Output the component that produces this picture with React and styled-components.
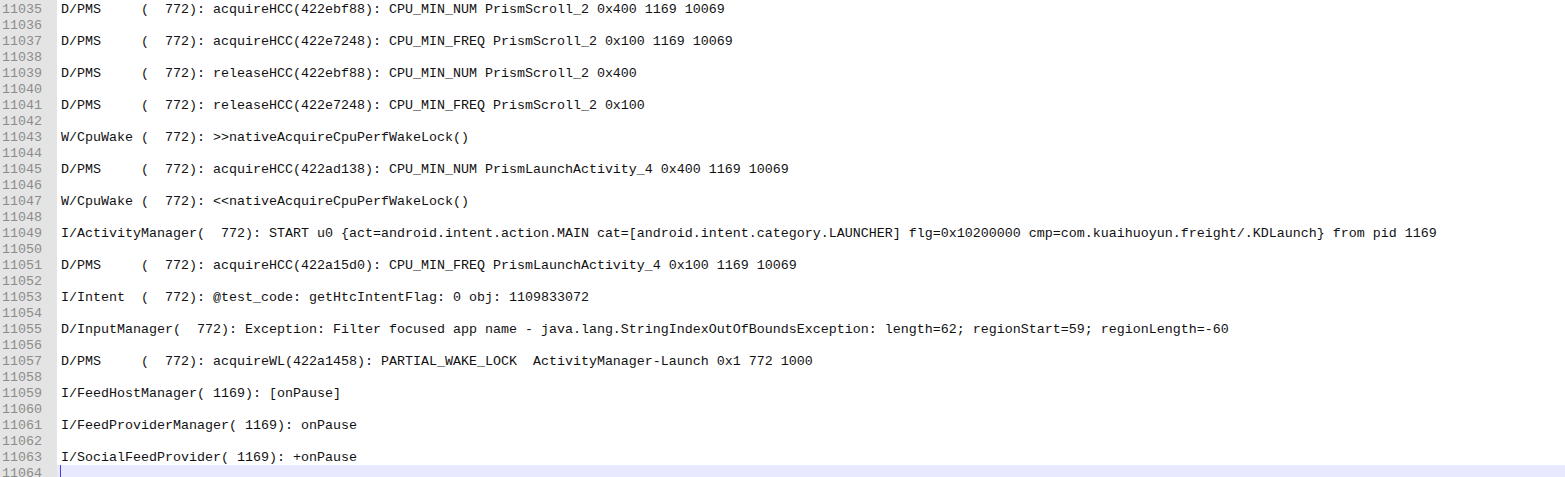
import React from "react"
import styled, { createGlobalStyle } from "styled-components"

const GlobalStyle = createGlobalStyle`
  html, body {
    margin: 0;
    padding: 0;
    background: #ffffff;
    overflow: hidden;
  }
`

const Editor = styled.div`
  width: 1565px;
  height: 477px;
  overflow: hidden;
  display: flex;
  flex-direction: column;
  padding-top: 1px;
  box-sizing: border-box;
  background: linear-gradient(to right, #e4e4e4 57px, #ffffff 57px);
  font-family: "Liberation Mono", "Courier New", monospace;
  font-size: 13.33px;
`

const Row = styled.div`
  display: grid;
  grid-template-columns: 57px 1fr;
  height: 16px;
  line-height: 18px;
  overflow: hidden;
  flex-shrink: 0;
`

const LineNo = styled.div`
  background: #e4e4e4;
  color: #8c8c8c;
  padding-left: 2px;
  white-space: pre;
`

const Code = styled.div`
  position: relative;
  padding-left: 4px;
  color: #111111;
  white-space: pre;
  background: ${({ current }) => (current ? "#e8e8ff" : "#ffffff")};
`

const Caret = styled.span`
  position: absolute;
  left: 3px;
  top: 0;
  width: 1px;
  height: 16px;
  background: #4b3fd6;
`

const lines = [
  "D/PMS     (  772): acquireHCC(422ebf88): CPU_MIN_NUM PrismScroll_2 0x400 1169 10069",
  "",
  "D/PMS     (  772): acquireHCC(422e7248): CPU_MIN_FREQ PrismScroll_2 0x100 1169 10069",
  "",
  "D/PMS     (  772): releaseHCC(422ebf88): CPU_MIN_NUM PrismScroll_2 0x400",
  "",
  "D/PMS     (  772): releaseHCC(422e7248): CPU_MIN_FREQ PrismScroll_2 0x100",
  "",
  "W/CpuWake (  772): >>nativeAcquireCpuPerfWakeLock()",
  "",
  "D/PMS     (  772): acquireHCC(422ad138): CPU_MIN_NUM PrismLaunchActivity_4 0x400 1169 10069",
  "",
  "W/CpuWake (  772): <<nativeAcquireCpuPerfWakeLock()",
  "",
  "I/ActivityManager(  772): START u0 {act=android.intent.action.MAIN cat=[android.intent.category.LAUNCHER] flg=0x10200000 cmp=com.kuaihuoyun.freight/.KDLaunch} from pid 1169",
  "",
  "D/PMS     (  772): acquireHCC(422a15d0): CPU_MIN_FREQ PrismLaunchActivity_4 0x100 1169 10069",
  "",
  "I/Intent  (  772): @test_code: getHtcIntentFlag: 0 obj: 1109833072",
  "",
  "D/InputManager(  772): Exception: Filter focused app name - java.lang.StringIndexOutOfBoundsException: length=62; regionStart=59; regionLength=-60",
  "",
  "D/PMS     (  772): acquireWL(422a1458): PARTIAL_WAKE_LOCK  ActivityManager-Launch 0x1 772 1000",
  "",
  "I/FeedHostManager( 1169): [onPause]",
  "",
  "I/FeedProviderManager( 1169): onPause",
  "",
  "I/SocialFeedProvider( 1169): +onPause",
  "",
]

const FIRST = 11035

const App = () => {
  return (
    <Editor>
      <GlobalStyle />
      {lines.map((text, i) => {
        const current = i === lines.length - 1
        return (
          <Row key={i}>
            <LineNo>{FIRST + i}</LineNo>
            <Code current={current}>
              {current && <Caret />}
              {text}
            </Code>
          </Row>
        )
      })}
    </Editor>
  )
}

export default App
